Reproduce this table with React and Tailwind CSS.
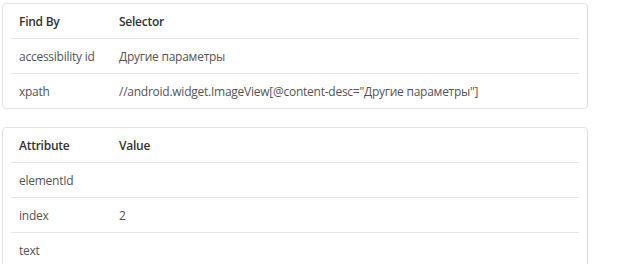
const findRows = [
  ["accessibility id", "Другие параметры"],
  ["xpath", '//android.widget.ImageView[@content-desc="Другие параметры"]'],
];

const attrRows = [
  ["elementId", ""],
  ["index", "2"],
  ["text", ""],
];

function Table({ head, rows }) {
  return (
    <div className="w-[586px] rounded-[4px] border border-[#e3e3e3] bg-white px-2 text-[12px] leading-5 tracking-[-0.25px]">
      <div className="flex h-[34px] items-center pt-[2px] font-semibold text-[#333]">
        <div className="w-[100px] pl-2">{head[0]}</div>
        <div className="pl-2">{head[1]}</div>
      </div>
      {rows.map(([k, v]) => (
        <div key={k} className="flex h-[35px] items-center border-t border-[#e6e6e6] pt-[2px] text-[#555]">
          <div className="w-[100px] pl-2">{k}</div>
          <div className="pl-2">{v}</div>
        </div>
      ))}
    </div>
  );
}

export default function App() {
  return (
    <div className="min-h-screen bg-white pl-[2px] pt-[3px] font-['Open_Sans',sans-serif]">
      <Table head={["Find By", "Selector"]} rows={findRows} />
      <div className="mt-[18px]">
        <Table head={["Attribute", "Value"]} rows={attrRows} />
      </div>
    </div>
  );
}
